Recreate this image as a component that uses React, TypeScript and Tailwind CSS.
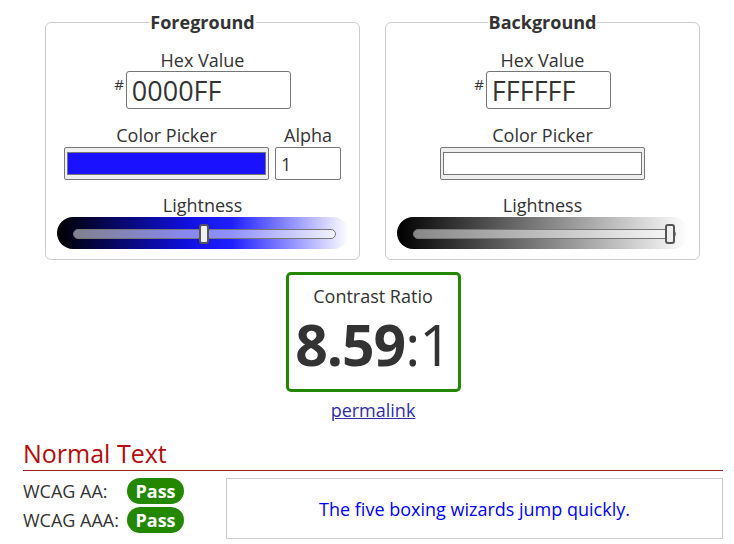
import React from "react"

const font = { fontFamily: '"Open Sans", "Liberation Sans", sans-serif' }

function Slider({ gradient, value }: { gradient: string; value: number }) {
  return (
    <div className={`mx-auto mt-[1px] h-[32px] w-[292px] rounded-full pl-[16px] pr-[13px] pt-[12px] ${gradient}`}>
      <div className="relative h-[10px] rounded-full border border-[#777] bg-white/50">
        <div
          className="absolute top-[-6px] h-[20px] w-[10px] rounded-[3px] border-2 border-[#555] bg-[#efefef]"
          style={{ left: `calc(${value}% - ${value / 10}px)` }}
        />
      </div>
    </div>
  )
}

function Swatch({ color }: { color: string }) {
  return (
    <div className="h-[33px] w-[205px] rounded-[2px] border border-[#767676] bg-[#efefef] px-[2px] py-[4px]">
      <div className="h-[23px] w-full border border-[#777]" style={{ background: color }} />
    </div>
  )
}

function Panel({
  title,
  hex,
  hexWidth,
  color,
  alpha,
  gradient,
  value,
}: {
  title: string
  hex: string
  hexWidth: string
  color: string
  alpha?: boolean
  gradient: string
  value: number
}) {
  return (
    <fieldset className="h-[250px] w-[315px] rounded-[6px] border border-[#ccc] px-0 pb-[10px]">
      <legend className="mx-auto px-[1px] text-[18px] font-bold leading-[24px] text-[#333]">{title}</legend>
      <div className="mt-[15px] text-center text-[18px] leading-[22px]">Hex Value</div>
      <div className="flex h-[38px] justify-center">
        <span className="mr-[2px] mt-[4px] text-[15px] leading-[18px]">#</span>
        <input
          readOnly
          value={hex}
          className={`h-[38px] ${hexWidth} rounded-[3px] border border-[#767676] px-[5px] text-[27px] leading-none text-[#333] outline-none`}
        />
      </div>
      <div className="mt-[15px] flex justify-center gap-[6px]">
        <div className="flex flex-col items-center">
          <div className="text-[18px] leading-[22px]">Color Picker</div>
          <div className="mt-[1px]">
            <Swatch color={color} />
          </div>
        </div>
        {alpha && (
          <div className="flex flex-col items-center">
            <div className="text-[18px] leading-[22px]">Alpha</div>
            <input
              readOnly
              value="1"
              className="mt-[1px] h-[33px] w-[66px] rounded-[2px] border border-[#767676] px-[5px] text-[18px] text-[#333] outline-none"
            />
          </div>
        )}
      </div>
      <div className="mt-[14px] text-center text-[18px] leading-[22px]">Lightness</div>
      <Slider gradient={gradient} value={value} />
    </fieldset>
  )
}

export default function App() {
  return (
    <div className="h-[544px] w-[734px] overflow-hidden bg-white text-[#333]" style={font}>
      <div className="ml-[23px] w-[700px]">
        <div className="ml-[22px] flex gap-[25px] pt-[10px]">
          <Panel
            title="Foreground"
            hex="0000FF"
            hexWidth="w-[165px]"
            color="#1a12ff"
            alpha
            gradient="bg-[linear-gradient(to_right,#000,#1010e0_45%,#2020ff_60%,#fff)]"
            value={50}
          />
          <Panel
            title="Background"
            hex="FFFFFF"
            hexWidth="w-[125px]"
            color="#ffffff"
            gradient="bg-[linear-gradient(to_right,#000,#fff)]"
            value={100}
          />
        </div>

        <div className="mt-[12px] flex flex-col items-center">
          <div className="flex h-[120px] w-[175px] flex-col items-center rounded-[5px] border-[3px] border-[#238700]">
            <div className="mt-[9px] text-[18px] leading-[24px]">Contrast Ratio</div>
            <div className="mt-[6px] text-[57px] leading-[60px] tracking-[-1px]">
              <span className="font-bold">8.59</span>:1
            </div>
          </div>
          <a href="#" className="mt-[6px] text-[18px] leading-[24px] text-[#2e2ea8] underline">
            permalink
          </a>
        </div>

        <h2 className="mt-[14px] border-b border-[#a51c20] text-[25px] leading-[34px] text-[#b30d0d]">
          Normal Text
        </h2>

        <div className="mt-[7px] flex">
          <div className="w-[203px]">
            <div className="flex h-[26px] items-center">
              <span className="w-[104px] text-[18px]">WCAG AA:</span>
              <span className="flex h-[26px] w-[57px] items-center justify-center rounded-full bg-[#238700] text-[18px] font-bold text-white">
                Pass
              </span>
            </div>
            <div className="mt-[3px] flex h-[26px] items-center">
              <span className="w-[104px] text-[18px]">WCAG AAA:</span>
              <span className="flex h-[26px] w-[57px] items-center justify-center rounded-full bg-[#238700] text-[18px] font-bold text-white">
                Pass
              </span>
            </div>
          </div>
          <div className="flex h-[61px] flex-1 items-center justify-center border border-[#ccc] pt-[2px] text-[18px] text-[#0000ff]">
            The five boxing wizards jump quickly.
          </div>
        </div>
      </div>
    </div>
  )
}
